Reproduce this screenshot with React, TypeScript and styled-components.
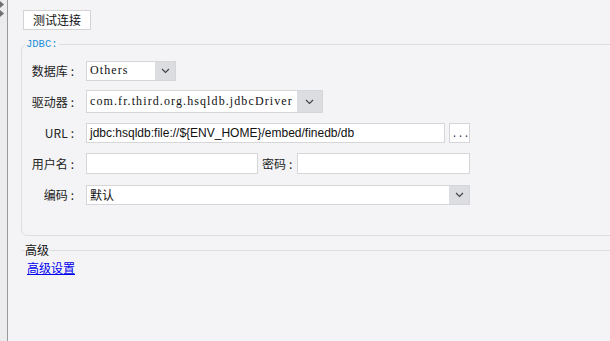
import React from 'react';
import styled, { createGlobalStyle } from 'styled-components';

const GlobalStyle = createGlobalStyle`
  html, body {
    margin: 0;
    padding: 0;
    background: #f4f4f6;
  }
  #root {
    height: 341px;
    overflow: hidden;
  }
`;

const Shell = styled.div`
  display: flex;
  height: 100%;
  font-family: "Noto Sans CJK SC", "Liberation Sans", sans-serif;
  font-size: 12px;
  color: #222;
`;

const SideStrip = styled.div`
  width: 7px;
  flex-shrink: 0;
  background: #ececee;
  border-right: 1px solid #9a9a9a;
  display: flex;
  flex-direction: column;
  gap: 2px;
  padding-top: 1px;
`;

const Main = styled.div`
  flex: 1;
  min-width: 0;
  padding: 10px 0 0 13px;
  background: #f4f4f6;
`;

const TestButton = styled.button`
  margin-left: 2px;
  height: 20px;
  width: 68px;
  padding: 0;
  background: #fff;
  border: 1px solid #d3d3d3;
  font-family: inherit;
  font-size: 12px;
  color: #111;
  line-height: 18px;
`;

const Group = styled.fieldset`
  margin: 9px -20px 0 0;
  padding: 0 0 25px 0;
  border: 1px solid #dedee0;
  border-radius: 6px;
  min-width: 0;
`;

const GroupTitle = styled.legend`
  margin-left: 3px;
  padding: 0 1px;
  font-family: "Liberation Mono", monospace;
  font-size: 10.5px;
  color: #1a8fdc;
  line-height: 11px;
`;

const Form = styled.div`
  display: grid;
  grid-template-columns: 52px auto;
  column-gap: 12px;
  grid-auto-rows: 31px;
  align-items: center;
  margin-top: 5px;
`;

const Label = styled.span`
  justify-self: end;
  white-space: nowrap;
  line-height: 14px;
`;

const Colon = styled.span`
  margin-left: 3px;
`;

const FieldRow = styled.div`
  display: flex;
  align-items: center;
  gap: 4px;
`;

const Box = styled.div<{ $w: number; $h?: number }>`
  width: ${p => p.$w}px;
  height: ${p => p.$h ?? 20}px;
  box-sizing: border-box;
  border: 1px solid #d6d6d8;
  background: #fff;
  display: flex;
  align-items: center;
  overflow: hidden;
`;

const BoxText = styled.span<{ $code?: boolean }>`
  flex: 1;
  padding-left: 3px;
  white-space: nowrap;
  overflow: hidden;
  font-family: ${p =>
    p.$code ? '"Liberation Serif", serif' : '"Liberation Sans", "Noto Sans CJK SC", sans-serif'};
  font-size: 12px;
  letter-spacing: ${p => (p.$code ? '1.1px' : '0')};
  color: #111;
`;

const Arrow = styled.div<{ $w: number }>`
  width: ${p => p.$w}px;
  align-self: stretch;
  background: #dcdde0;
  display: flex;
  align-items: center;
  justify-content: center;
`;

const DotsButton = styled.div`
  width: 21px;
  height: 20px;
  flex-shrink: 0;
  box-sizing: border-box;
  border: 1px solid #d6d6d8;
  background: #fff;
  font-family: "Liberation Mono", monospace;
  font-size: 10px;
  color: #3a2a5a;
  white-space: nowrap;
  display: flex;
  justify-content: center;
  align-items: flex-end;
  padding-left: 2px;
  line-height: 14px;
  letter-spacing: 0;
`;

const InlineLabel = styled.span`
  margin: 0 1px 0 0;
  white-space: nowrap;
`;

const Advanced = styled.fieldset`
  margin: 7px -20px 0 0;
  padding: 0 0 0 6px;
  border: none;
  border-top: 1px solid #dedee0;
  min-width: 0;
`;

const AdvancedTitle = styled.legend`
  margin-left: -2px;
  padding: 0;
  font-size: 12px;
  color: #111;
  line-height: 14px;
`;

const Link = styled.a`
  display: inline-block;
  margin-top: 4px;
  color: #0000ee;
  text-decoration: underline;
  font-size: 12px;
  line-height: 14px;
`;

const Chevron = () => (
  <svg width="9" height="6" viewBox="0 0 9 6">
    <polyline points="1,1 4.5,4.5 8,1" fill="none" stroke="#444" strokeWidth="1.2" />
  </svg>
);

const Tri = () => (
  <svg width="5" height="7" viewBox="0 0 5 7">
    <polygon points="0,0 4,3.5 0,7" fill="#707070" />
  </svg>
);

function Select({ w, h, arrow, code, children }: { w: number; h?: number; arrow: number; code?: boolean; children?: React.ReactNode }) {
  return (
    <Box $w={w} $h={h}>
      <BoxText $code={code}>{children}</BoxText>
      <Arrow $w={arrow}>
        <Chevron />
      </Arrow>
    </Box>
  );
}

export default function App() {
  return (
    <>
      <GlobalStyle />
      <Shell>
        <SideStrip>
          <Tri />
          <Tri />
        </SideStrip>
        <Main>
          <TestButton>测试连接</TestButton>
          <Group>
            <GroupTitle>JDBC:</GroupTitle>
            <Form>
              <Label>数据库<Colon>:</Colon></Label>
              <Select w={90} arrow={20} code>Others</Select>

              <Label>驱动器<Colon>:</Colon></Label>
              <Select w={237} h={23} arrow={25} code>com.fr.third.org.hsqldb.jdbcDriver</Select>

              <Label>URL<Colon>:</Colon></Label>
              <FieldRow>
                <Box $w={359}>
                  <BoxText>jdbc:hsqldb:file://${'{'}ENV_HOME{'}'}/embed/finedb/db</BoxText>
                </Box>
                <DotsButton>...</DotsButton>
              </FieldRow>

              <Label>用户名<Colon>:</Colon></Label>
              <FieldRow>
                <Box $w={172} $h={21} />
                <InlineLabel>密码<Colon>:</Colon></InlineLabel>
                <Box $w={173} $h={21} />
              </FieldRow>

              <Label>编码<Colon>:</Colon></Label>
              <Select w={384} arrow={20}>默认</Select>
            </Form>
          </Group>
          <Advanced>
            <AdvancedTitle>高级</AdvancedTitle>
            <Link href="#">高级设置</Link>
          </Advanced>
        </Main>
      </Shell>
    </>
  );
}
